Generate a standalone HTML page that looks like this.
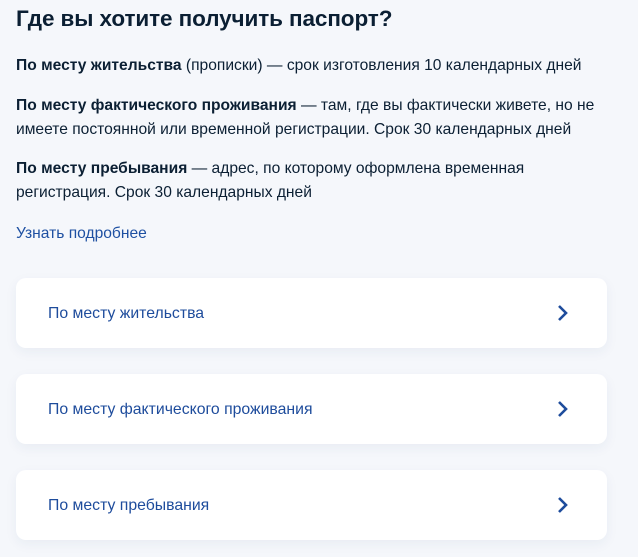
<!DOCTYPE html>
<html><head><meta charset="utf-8"><style>
body{margin:0;width:638px;height:557px;background:#f5f7fb;font-family:"Liberation Sans",sans-serif;color:#0b1f33;overflow:hidden;position:relative}
h1{position:absolute;left:16px;top:3px;margin:0;font-size:22.5px;font-weight:bold;line-height:32px;letter-spacing:-0.1px}
.p{position:absolute;left:16px;font-size:15.6px;line-height:24px;width:590px}
b{font-weight:bold}
.link{color:#1e50a2}
.card{position:absolute;left:16px;width:591px;height:70px;background:#fff;border-radius:10px;box-shadow:0 4px 12px rgba(40,70,120,0.06)}
.card span{position:absolute;left:32px;top:25px;font-size:15.8px;color:#1e4c9c;line-height:22px}
.card svg{position:absolute;left:541px;top:26px}
</style></head><body>
<h1>Где вы хотите получить паспорт?</h1>
<div class="p" style="top:54px"><b>По месту жительства</b> (прописки) — срок изготовления 10 календарных дней</div>
<div class="p" style="top:94px"><b>По месту фактического проживания</b> — там, где вы фактически живете, но не имеете постоянной или временной регистрации. Срок 30 календарных дней</div>
<div class="p" style="top:157px;width:520px"><b>По месту пребывания</b> — адрес, по которому оформлена временная регистрация. Срок 30 календарных дней</div>
<div class="p link" style="top:222px">Узнать подробнее</div>
<div class="card" style="top:278px"><span>По месту жительства</span><svg width="12" height="18" viewBox="0 0 12 18"><path d="M2 2l7 7-7 7" fill="none" stroke="#1e4c9c" stroke-width="2.6"/></svg></div>
<div class="card" style="top:374px"><span>По месту фактического проживания</span><svg width="12" height="18" viewBox="0 0 12 18"><path d="M2 2l7 7-7 7" fill="none" stroke="#1e4c9c" stroke-width="2.6"/></svg></div>
<div class="card" style="top:470px"><span>По месту пребывания</span><svg width="12" height="18" viewBox="0 0 12 18"><path d="M2 2l7 7-7 7" fill="none" stroke="#1e4c9c" stroke-width="2.6"/></svg></div>
</body></html>
